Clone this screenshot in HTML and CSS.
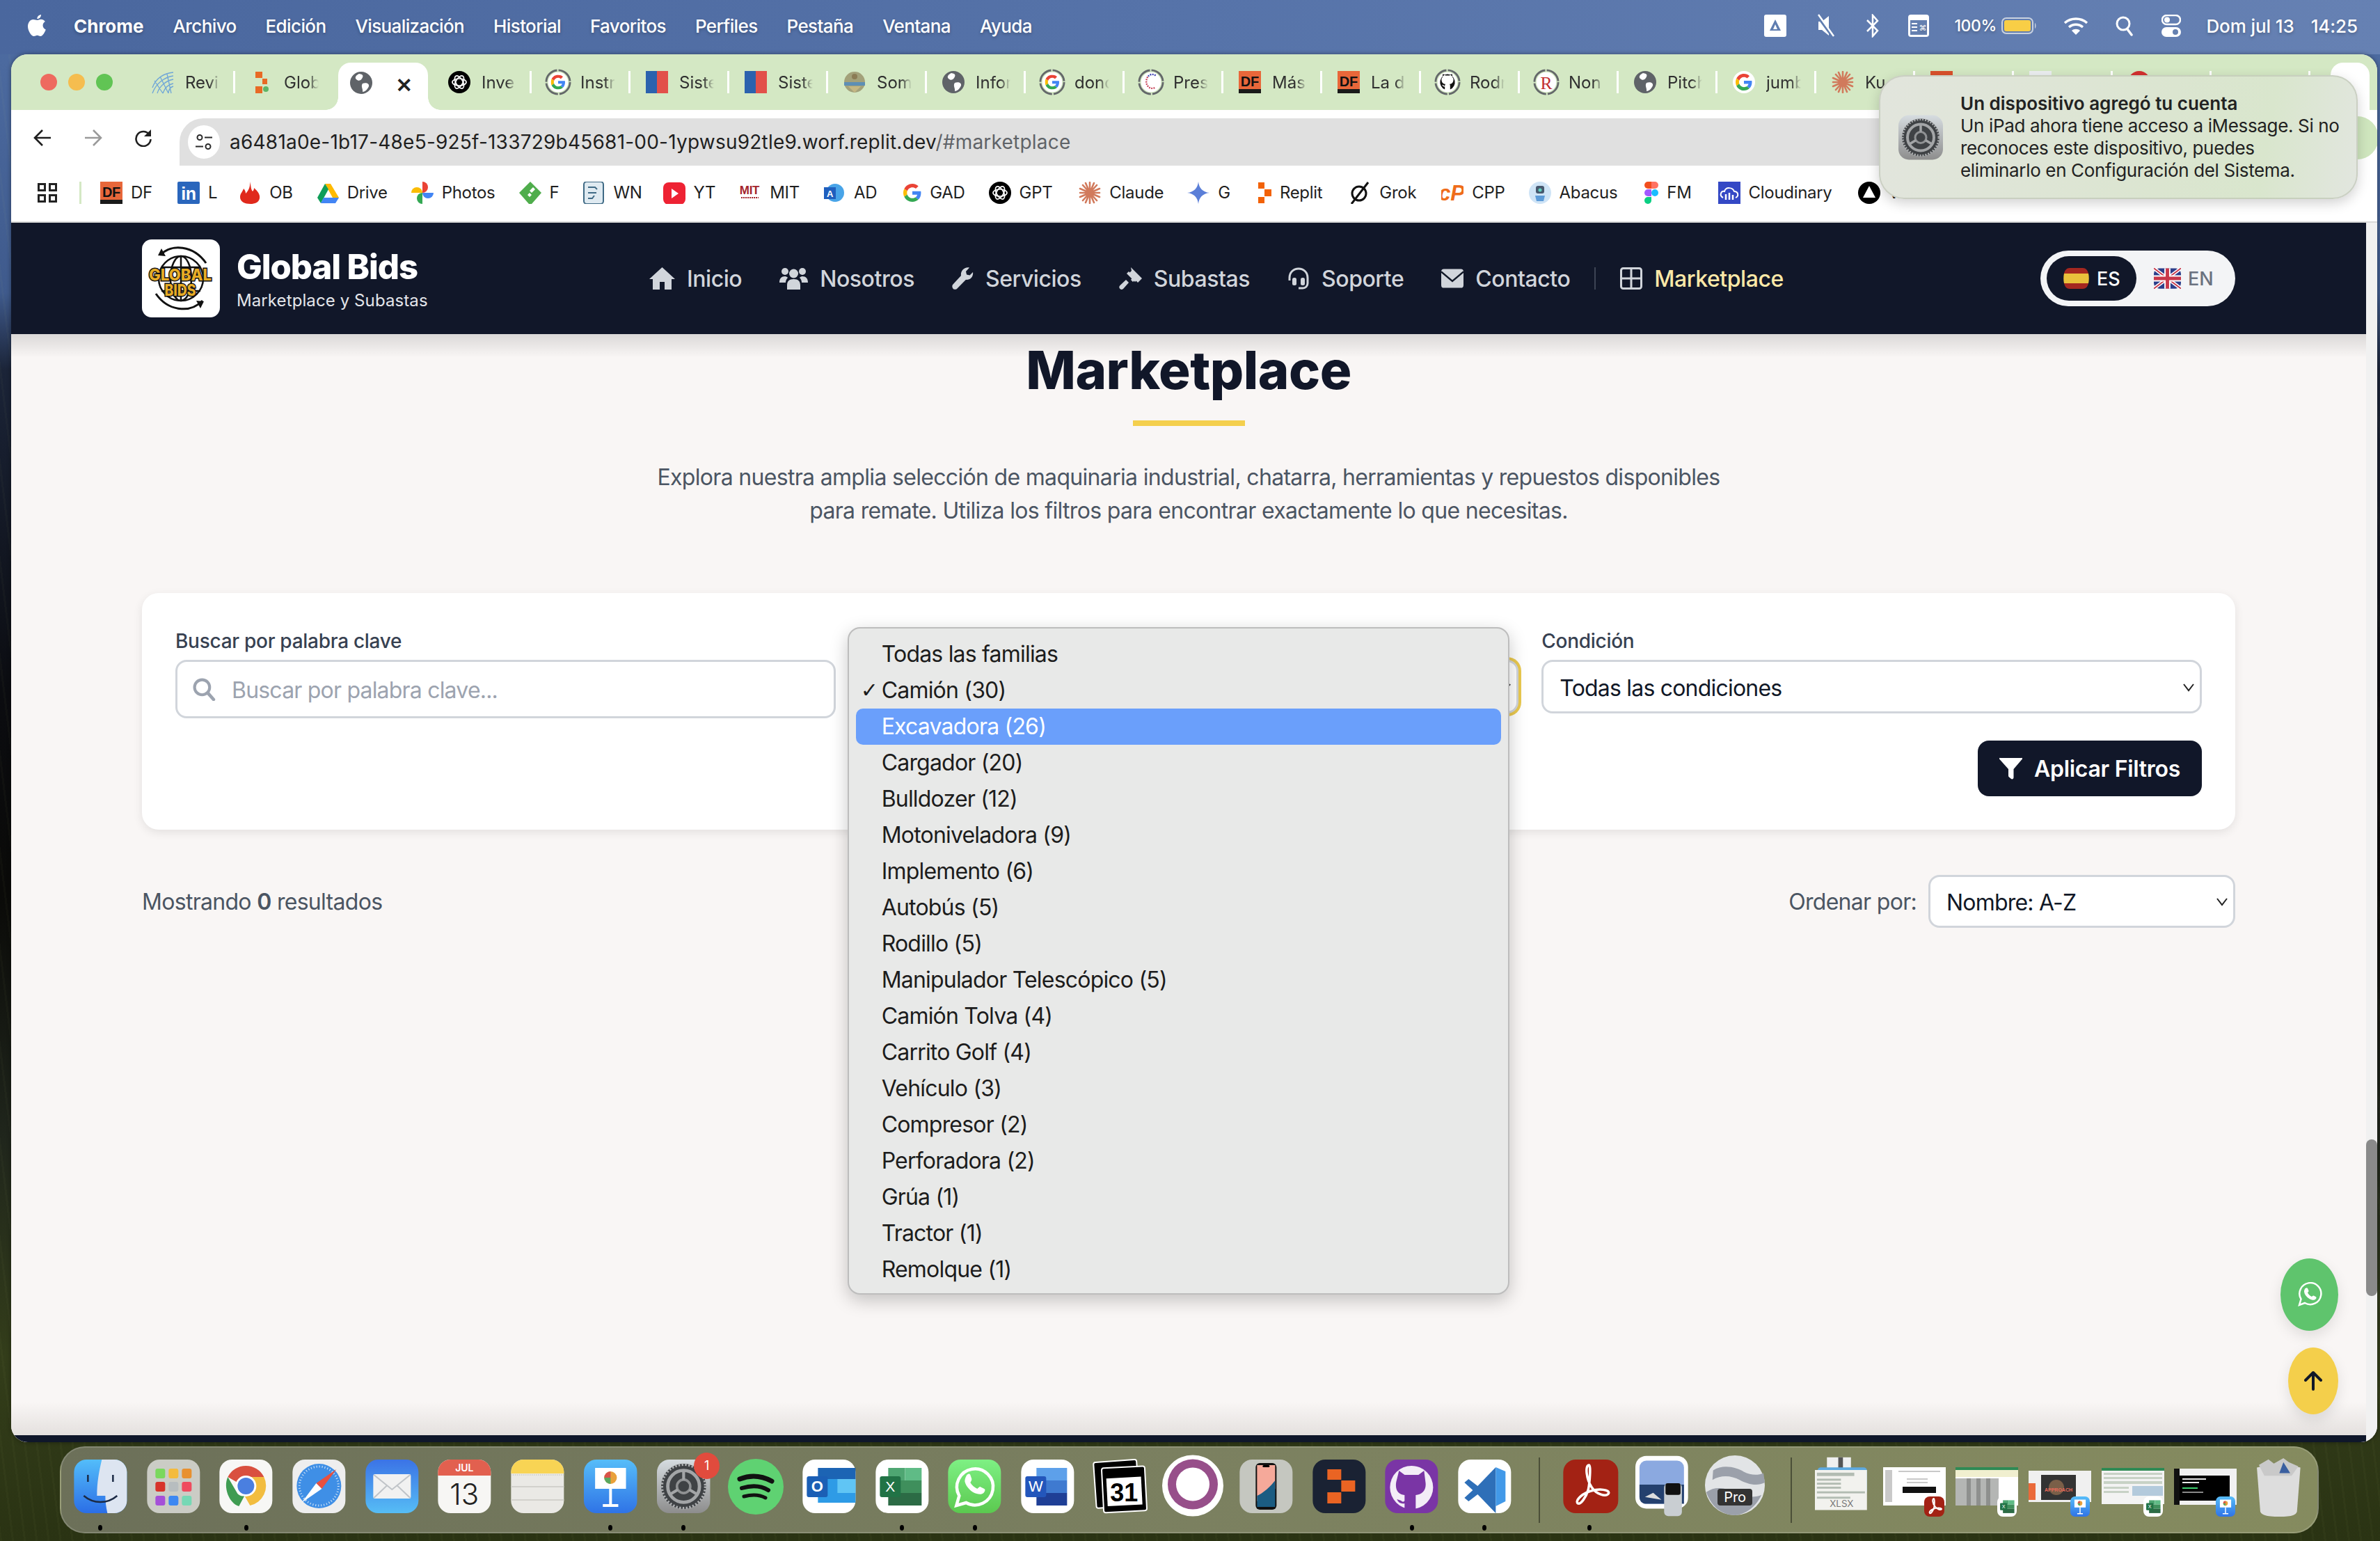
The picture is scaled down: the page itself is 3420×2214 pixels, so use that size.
FILE: index.html
```html
<!DOCTYPE html>
<html lang="es">
<head>
<meta charset="utf-8">
<title>Global Bids - Marketplace</title>
<link rel="stylesheet" href="styles.css">
</head>
<body>
<svg class="defs" width="0" height="0" aria-hidden="true">
  <symbol id="globe" viewBox="0 0 32 32"><circle cx="16" cy="16" r="16" fill="#5f6368"/><path fill="#fff" d="M13 3C9 5 6 8 9 11c3 3 6 2 8-1 2-3 3-6-4-7zM18 17c5-2 10 0 9 4-2 5-6 8-9 8 1-4-3-8 0-12z"/></symbol>
  <symbol id="g" viewBox="0 0 48 48"><path fill="#EA4335" d="M24 9.5c3.54 0 6.71 1.22 9.21 3.6l6.85-6.85C35.9 2.38 30.47 0 24 0 14.62 0 6.51 5.38 2.56 13.22l7.98 6.19C12.43 13.72 17.74 9.5 24 9.5z"/><path fill="#4285F4" d="M46.98 24.55c0-1.57-.15-3.09-.38-4.55H24v9.02h12.94c-.58 2.96-2.26 5.48-4.78 7.18l7.73 6c4.51-4.18 7.09-10.36 7.09-17.65z"/><path fill="#FBBC05" d="M10.53 28.59c-.48-1.45-.76-2.99-.76-4.59s.27-3.14.76-4.59l-7.98-6.19C.92 16.46 0 20.12 0 24c0 3.88.92 7.54 2.56 10.78l7.97-6.19z"/><path fill="#34A853" d="M24 48c6.48 0 11.93-2.13 15.89-5.81l-7.73-6c-2.15 1.45-4.92 2.3-8.16 2.3-6.26 0-11.57-4.22-13.47-9.91l-7.98 6.19C6.51 42.62 14.62 48 24 48z"/></symbol>
  <symbol id="ring" viewBox="0 0 40 40"><circle cx="20" cy="20" r="15" fill="#fff"/><circle cx="20" cy="20" r="18" fill="none" stroke="#64686a" stroke-width="3" stroke-dasharray="26 2.3"/></symbol>
  <symbol id="gpt" viewBox="0 0 32 32"><circle cx="16" cy="16" r="16" fill="#000"/><g fill="none" stroke="#fff" stroke-width="1.7"><ellipse cx="16" cy="16" rx="10" ry="5"/><ellipse cx="16" cy="16" rx="10" ry="5" transform="rotate(60 16 16)"/><ellipse cx="16" cy="16" rx="10" ry="5" transform="rotate(120 16 16)"/></g></symbol>
  <symbol id="df" viewBox="0 0 32 32"><rect width="32" height="32" fill="#e8673a"/><rect y="26" width="32" height="6" fill="#1a1a1a"/><text x="16" y="22" text-anchor="middle" font-family="Liberation Sans" font-weight="700" font-size="20" fill="#111">DF</text></symbol>
  <symbol id="claude" viewBox="0 0 32 32"><path stroke="#d17a5c" stroke-width="2.6" stroke-linecap="round" d="M16 1v30M2 16h28M6 5l20 22M26 5L6 27M10 2l12 28M22 2L10 30M2 10l28 12M30 10L2 22"/></symbol>
  <symbol id="gear" viewBox="0 0 64 64"><defs><linearGradient id="gg" x1="0" y1="0" x2="0" y2="1"><stop offset="0" stop-color="#d6dce0"/><stop offset="1" stop-color="#8d8d8d"/></linearGradient></defs><rect width="64" height="64" rx="15" fill="url(#gg)"/><circle cx="32" cy="32" r="27" fill="#3f4245"/><circle cx="32" cy="32" r="26" fill="none" stroke="#aeb0b2" stroke-width="3" stroke-dasharray="2 2"/><circle cx="32" cy="32" r="19" fill="none" stroke="#a3a5a7" stroke-width="4"/><circle cx="32" cy="32" r="8" fill="none" stroke="#8f9193" stroke-width="3"/><path stroke="#a3a5a7" stroke-width="3.5" d="M32 24V13M39 36l10 6M25 36l-10 6"/></symbol>
  <symbol id="excelmark" viewBox="0 0 76 77"><path fill="#4ea672" d="M18 12h24v18H18z"/><path fill="#5fbb86" d="M42 12h24v18H42z"/><path fill="#3f8f5c" d="M18 30h48v18H18z"/><path fill="#2c6b45" d="M18 48h48v18H18z"/><rect x="6" y="24" width="30" height="30" rx="3" fill="#217346"/><text x="21" y="46" text-anchor="middle" font-family="Liberation Sans" font-size="21" fill="#fff">X</text></symbol>
  <symbol id="keymark" viewBox="0 0 76 77" preserveAspectRatio="none"><defs><linearGradient id="kg" x1="0" y1="0" x2="0" y2="1"><stop offset="0" stop-color="#56bdf9"/><stop offset="1" stop-color="#2f73e6"/></linearGradient></defs><rect width="76" height="77" rx="18" fill="url(#kg)"/><path fill="#fff" d="M16 12h44v30H16z"/><circle cx="38" cy="26" r="9" fill="#e9a13b"/><path fill="#5aa85f" d="M38 26v9a9 9 0 0 1-9-9z"/><path fill="#d8534a" d="M38 26V17a9 9 0 0 0-9 9z"/><path fill="#fff" d="M36 42h4v24h-4zM27 64h22v4H27z"/></symbol>
</svg>

<header class="menubar">
  <svg class="apple" viewBox="0 0 26 32"><path fill="#fff" d="M19 0c.3 3-2.4 6.300-5.600 6.100C13 3 16 .3 19 0zM13.500 8c1.500 0 3-1.300 5.500-1.300 2 0 4.300 1 5.800 3.200-4.900 2.900-4 9.500 1 11.600-1 3-4.300 9.500-7.600 9.500-1.800 0-2.600-1.300-4.700-1.300s-2.900 1.300-4.700 1.300C4.800 31 0 23 0 17 0 11 3.800 7 7.600 7c2.400 0 4.200 1 5.900 1z"/></svg>
  <nav class="menu-items">
    <span class="menu-app">Chrome</span><span>Archivo</span><span>Edición</span><span>Visualización</span><span>Historial</span><span>Favoritos</span><span>Perfiles</span><span>Pestaña</span><span>Ventana</span><span>Ayuda</span>
  </nav>
  <div class="status">
    <svg class="st st-drive" viewBox="0 0 32 32"><rect width="32" height="32" rx="3" fill="#fff"/><path d="M16 7l8 16H8z" fill="#5f7db0"/><path d="M16 14l3 7h-6z" fill="#fff"/></svg>
    <svg class="st st-mute" viewBox="0 0 26 34"><path fill="#fff" d="M3 11h5l10-8v28l-10-8H3z"/><path stroke="#5f7db0" stroke-width="4" d="M1 2l22 30"/><path stroke="#fff" stroke-width="2.500" d="M3 1l22 31"/></svg>
    <svg class="st st-bt" viewBox="0 0 20 34"><path fill="none" stroke="#fff" stroke-width="2.500" d="M2 9l15 15-7 8V2l7 8L2 25"/></svg>
    <svg class="st st-kb" viewBox="0 0 30 32"><rect width="30" height="32" rx="4" fill="#fff"/><rect x="3" y="8" width="24" height="21" fill="#6580b0"/><path stroke="#fff" stroke-width="2" d="M5 13h8M5 18h8M5 23h8"/><text x="21" y="23" text-anchor="middle" font-size="11" fill="#fff" font-family="DejaVu Sans">⌘</text></svg>
    <span class="st-pct">100%</span>
    <svg class="st st-bat" viewBox="0 0 51 24"><rect x="1" y="1" width="44" height="22" rx="6" fill="none" stroke="#c9d2e0" stroke-width="2"/><rect x="4" y="4" width="38" height="16" rx="3" fill="#f8ce46"/><path d="M48 8c2 1 2 7 0 8z" fill="#c9d2e0"/></svg>
    <svg class="st st-wifi" viewBox="0 0 36 26"><g fill="none" stroke="#fff" stroke-width="3.500"><path d="M2 9c9-8 23-8 32 0"/><path d="M8 15c6-5 14-5 20 0"/></g><path fill="#fff" d="M18 26l-6-6c3-3 9-3 12 0z"/></svg>
    <svg class="st st-search" viewBox="0 0 25 30"><circle cx="11" cy="12" r="9" fill="none" stroke="#fff" stroke-width="3"/><path stroke="#fff" stroke-width="3.500" stroke-linecap="round" d="M17 20l6 8"/></svg>
    <svg class="st st-cc" viewBox="0 0 28 32"><rect x="1" y="1" width="26" height="13" rx="6.500" fill="none" stroke="#fff" stroke-width="2.500"/><circle cx="8" cy="7.500" r="4" fill="#fff"/><rect y="18" width="28" height="14" rx="7" fill="#fff"/><circle cx="20" cy="25" r="4" fill="#6580b0"/></svg>
    <span class="clock"><span>Dom jul 13</span><span>14:25</span></span>
  </div>
</header>

<div class="window">
  <div class="tabstrip">
    <div class="lights"><i class="light light-r"></i><i class="light light-y"></i><i class="light light-g"></i></div>
    <div class="tabs">
      <div class="tab"><svg class="fav" viewBox="0 0 32 32"><g fill="none" stroke="#6fa6d8" stroke-width="1.300"><path d="M1 24C6 10 18 3 31 2M1 32C6 18 18 9 31 7M8 32c3-10 12-18 23-20M16 32c3-8 8-13 15-14M24 32c0-5 3-9 7-10M4 14l12 18M12 8l12 24M22 4l6 28"/></g></svg><span class="tab-t">Revis</span></div>
      <div class="tab"><svg class="fav" viewBox="0 0 32 32"><path fill="#e86a25" d="M7 1h10v9H7zM7 22h10v10H7zM17 11h7v8h-7z"/><circle cx="22" cy="26" r="4" fill="#5eb567"/></svg><span class="tab-t">Globa</span></div>
      <div class="tab tab-active"><svg class="fav"><use href="#globe"/></svg><span class="tab-x">×</span></div>
      <div class="tab"><svg class="fav"><use href="#gpt"/></svg><span class="tab-t">Inve</span></div>
      <div class="tab"><svg class="fav fav-ring" viewBox="0 0 40 40"><use href="#ring"/><use href="#g" x="9" y="9" width="22" height="22"/></svg><span class="tab-t">Instr</span></div>
      <div class="tab"><svg class="fav" viewBox="0 0 32 32"><rect width="16" height="32" fill="#2b62ae"/><rect x="16" width="16" height="32" fill="#e2504a"/></svg><span class="tab-t">Siste</span></div>
      <div class="tab"><svg class="fav" viewBox="0 0 32 32"><rect width="32" height="32" fill="#2b62ae" x="0"/><rect x="16" width="16" height="32" fill="#e2504a"/></svg><span class="tab-t">Siste</span></div>
      <div class="tab"><svg class="fav" viewBox="0 0 32 32"><circle cx="16" cy="16" r="15" fill="#a3a17a"/><path d="M1 16h30v5H1z" fill="#5d8fb5"/><path d="M7 22h18l-9 9z" fill="#c4b783"/><circle cx="16" cy="8" r="4" fill="#8b7b55"/></svg><span class="tab-t">Som</span></div>
      <div class="tab"><svg class="fav"><use href="#globe"/></svg><span class="tab-t">Infor</span></div>
      <div class="tab"><svg class="fav fav-ring" viewBox="0 0 40 40"><use href="#ring"/><use href="#g" x="9" y="9" width="22" height="22"/></svg><span class="tab-t">donde</span></div>
      <div class="tab"><svg class="fav fav-ring" viewBox="0 0 40 40"><use href="#ring"/><path fill="none" stroke="#3a3fae" stroke-width="2.500" stroke-dasharray="2 1.500" d="M27 10c-4-3-9-2-12 2"/><path fill="none" stroke="#c9455a" stroke-width="2.500" stroke-dasharray="2 1.500" d="M15 12c-3 5-3 11 1 15 3 3 7 3 11 1"/></svg><span class="tab-t">Pres</span></div>
      <div class="tab"><svg class="fav"><use href="#df"/></svg><span class="tab-t">Más</span></div>
      <div class="tab"><svg class="fav"><use href="#df"/></svg><span class="tab-t">La d</span></div>
      <div class="tab"><svg class="fav fav-ring" viewBox="0 0 40 40"><use href="#ring"/><path fill="#111" d="M20 8a12 12 0 0 0-4 23v-4c-3 0-4-2-4-3 2 0 3 2 4 2 0-2 1-3 1-3-3 0-6-2-6-7 0-2 1-3 2-4-1-2 0-4 0-4s2 0 4 2h6c2-2 4-2 4-2s1 2 0 4c1 1 2 2 2 4 0 5-3 7-6 7 1 1 1 2 1 3v5A12 12 0 0 0 20 8z"/></svg><span class="tab-t">Rodr</span></div>
      <div class="tab"><svg class="fav fav-ring" viewBox="0 0 40 40"><use href="#ring"/><text x="20" y="30" text-anchor="middle" font-family="Liberation Serif" font-size="27" fill="#c22f2f">R</text></svg><span class="tab-t">Non</span></div>
      <div class="tab"><svg class="fav"><use href="#globe"/></svg><span class="tab-t">Pitch</span></div>
      <div class="tab"><svg class="fav" viewBox="0 0 32 32"><circle cx="16" cy="16" r="16" fill="#fff"/><use href="#g" x="4" y="4" width="24" height="24"/></svg><span class="tab-t">jumb</span></div>
      <div class="tab"><svg class="fav"><use href="#claude"/></svg><span class="tab-t">Ku</span></div>
      <div class="tab"><svg class="fav" viewBox="0 0 32 32"><rect width="32" height="32" fill="#d9512c"/></svg></div>
      <div class="tab"><svg class="fav" viewBox="0 0 32 32"><rect width="32" height="32" fill="#eceff1"/></svg></div>
      <div class="tab"><svg class="fav" viewBox="0 0 32 32"><circle cx="16" cy="16" r="16" fill="#d3302f"/></svg></div>
      <div class="tab"></div>
    </div>
    <div class="tab-last"></div>
  </div>

  <div class="toolbar">
    <svg class="nav-ic" viewBox="0 0 26 26"><path fill="none" stroke="#1f1f1f" stroke-width="2.600" d="M25 13H3M13 2L2 13l11 11"/></svg>
    <svg class="nav-ic nav-ic-fwd" viewBox="0 0 26 26"><path fill="none" stroke="#9a9a9a" stroke-width="2.600" d="M1 13h22M13 2l11 11-11 11"/></svg>
    <svg class="nav-ic" viewBox="0 0 26 26"><path fill="none" stroke="#1f1f1f" stroke-width="2.600" d="M22 9a10.500 10.500 0 1 0 1.500 6"/><path fill="#1f1f1f" d="M24 1v10H14z"/></svg>
    <div class="omnibox">
      <span class="tune"><svg viewBox="0 0 26 26"><g fill="none" stroke="#2a2a2a" stroke-width="2"><circle cx="7" cy="6.500" r="3.500"/><circle cx="19" cy="19.500" r="3.500"/><path d="M14 6.500h11M1 19.500h11"/></g></svg></span>
      <span class="url">a6481a0e-1b17-48e5-925f-133729b45681-00-1ypwsu92tle9.worf.replit.dev<span class="url-hash">/#marketplace</span></span>
    </div>
    <div class="avatar"></div>
  </div>

  <div class="bookmarks">
    <svg class="bm-apps" viewBox="0 0 28 28"><g fill="none" stroke="#222" stroke-width="3"><rect x="1.500" y="1.500" width="9" height="9"/><rect x="17.500" y="1.500" width="9" height="9"/><rect x="1.500" y="17.500" width="9" height="9"/><rect x="17.500" y="17.500" width="9" height="9"/></g></svg>
    <i class="bm-sep"></i>
    <div class="bm"><svg class="bi"><use href="#df"/></svg>DF</div>
    <div class="bm"><svg class="bi" viewBox="0 0 32 32"><rect width="32" height="32" rx="2" fill="#2a66bc"/><text x="16" y="26" text-anchor="middle" font-family="Liberation Sans" font-weight="700" font-size="25" fill="#fff">in</text></svg>L</div>
    <div class="bm"><svg class="bi" viewBox="0 0 32 32"><path fill="#e0291c" d="M16 0c2 6 1 10 4 14 2-2 2-4 2-5 6 5 9 10 8 15-1 6-7 8-13 8C9 32 2 29 2 22c0-5 4-8 5-12 2 2 3 4 3 7 4-4 7-10 6-17z"/></svg>OB</div>
    <div class="bm"><svg class="bi" viewBox="0 0 32 32"><path fill="#ffba00" d="M20 3l12 20h-9L12 3z"/><path fill="#0f9d58" d="M12 3L1 23l5 8 11-20z"/><path fill="#4285f4" d="M10 23h22l-5 8H6z"/></svg>Drive</div>
    <div class="bm"><svg class="bi" viewBox="0 0 32 32"><path fill="#ea4335" d="M16 0a8 8 0 0 1 0 16z"/><path fill="#4285f4" d="M32 16a8 8 0 0 1-16 0z"/><path fill="#34a853" d="M16 32a8 8 0 0 1 0-16z"/><path fill="#fbbc05" d="M0 16a8 8 0 0 1 16 0z"/></svg>Photos</div>
    <div class="bm"><svg class="bi" viewBox="0 0 32 32"><path fill="#4fad4c" d="M16 0l16 16-14 16h-4L0 16z"/><path fill="#fff" d="M15 13l5-5 3 3-5 5zM12 19l3-3 3 3-3 3z"/></svg>F</div>
    <div class="bm"><svg class="bi" viewBox="0 0 32 32"><rect x="2" width="28" height="32" rx="4" fill="#dfeaf1" stroke="#3f6a85" stroke-width="2"/><path fill="none" stroke="#3f6a85" stroke-width="2" d="M8 8h10l3 3M8 16h12M8 24h6l3-4"/></svg>WN</div>
    <div class="bm"><svg class="bi" viewBox="0 0 32 32"><rect width="32" height="32" rx="8" y="1" fill="#ee2233"/><path fill="#fff" d="M12 10l10 7-10 7z"/></svg>YT</div>
    <div class="bm"><svg class="bi" viewBox="0 0 32 32"><text x="15" y="18" text-anchor="middle" font-family="Liberation Sans" font-weight="700" font-size="17" fill="#a3252c">MIT</text><path stroke="#a3252c" stroke-width="2" d="M3 23h25" stroke-dasharray="2 1"/></svg>MIT</div>
    <div class="bm"><svg class="bi" viewBox="0 0 32 32"><circle cx="17" cy="16" r="13" fill="#48a4e8"/><rect x="1" y="8" width="17" height="17" fill="#1f5fbe"/><text x="9.500" y="22" text-anchor="middle" font-family="Liberation Sans" font-weight="700" font-size="13" fill="#fff">A</text></svg>AD</div>
    <div class="bm"><svg class="bi bi-narrow" viewBox="0 0 48 48"><use href="#g"/></svg>GAD</div>
    <div class="bm"><svg class="bi"><use href="#gpt"/></svg>GPT</div>
    <div class="bm"><svg class="bi"><use href="#claude"/></svg>Claude</div>
    <div class="bm"><svg class="bi" viewBox="0 0 32 32"><path fill="#5b7fd8" d="M16 0c1 9 6 15 16 16-10 1-15 7-16 16-1-9-6-15-16-16 10-1 15-7 16-16z"/></svg>G</div>
    <div class="bm"><svg class="bi bi-slim" viewBox="0 0 20 32"><path fill="#f26207" d="M1 1h9v9H1zM10 11h10v10H10zM1 22h9v9H1z"/></svg>Replit</div>
    <div class="bm"><svg class="bi" viewBox="0 0 32 32"><circle cx="15" cy="17" r="10" fill="none" stroke="#111" stroke-width="3"/><path stroke="#111" stroke-width="3" d="M28 1L4 32"/></svg>Grok</div>
    <div class="bm"><svg class="bi" viewBox="0 0 32 32"><text x="15" y="27" text-anchor="middle" font-family="Liberation Sans" font-style="italic" font-weight="700" font-size="31" fill="#ef6c1a">cP</text></svg>CPP</div>
    <div class="bm"><svg class="bi" viewBox="0 0 32 32"><circle cx="16" cy="16" r="16" fill="#cfe4f6"/><rect x="10" y="6" width="12" height="11" rx="3" fill="#47586e"/><circle cx="16" cy="12" r="2.500" fill="#5fd0c0"/><path d="M9 20h14l-2 8H11z" fill="#5d9bd8"/></svg>Abacus</div>
    <div class="bm"><svg class="bi bi-slim" viewBox="0 0 20 32"><path fill="#f24e1e" d="M10 0v10H5a5 5 0 0 1 0-10z"/><path fill="#ff7262" d="M10 0h5a5 5 0 0 1 0 10h-5z"/><path fill="#a259ff" d="M10 11v10H5a5 5 0 0 1 0-10z"/><circle cx="15" cy="16" r="5" fill="#1abcfe"/><path fill="#0acf83" d="M5 22h5v5a5 5 0 1 1-5-5z"/></svg>FM</div>
    <div class="bm"><svg class="bi" viewBox="0 0 32 32"><rect width="32" height="32" fill="#3448c5"/><path fill="none" stroke="#fff" stroke-width="2" d="M7 23c-6-3-3-10 2-9 2-7 12-6 14 0 6 0 7 7 2 9"/><path stroke="#fff" stroke-width="2.500" d="M11 18v8M16 16v10M21 19v7"/></svg>Cloudinary</div>
    <div class="bm"><svg class="bi" viewBox="0 0 32 32"><circle cx="16" cy="16" r="16" fill="#000"/><path fill="#fff" d="M16 6l9 17H7z"/></svg>V</div>
  </div>

  <div class="viewport">
    <div class="page">
      <header class="site-header">
        <div class="brand">
          <svg class="logo" viewBox="0 0 112 112">
            <rect width="112" height="112" rx="14" fill="#fff"/>
            <g fill="none" stroke="#111" stroke-width="2.500"><circle cx="56" cy="56" r="32"/><ellipse cx="56" cy="56" rx="15" ry="32"/><path d="M56 24v64M28 40h56M28 74h56"/><path stroke-width="3" d="M27 22C42 6 74 8 92 34M87 88C70 106 38 104 20 78"/></g>
            <path fill="#111" d="M23 23l5-10 6 11zM89 89l-5 10-6-11z"/>
            <g class="logo-word"><text x="55" y="59" text-anchor="middle" font-size="23" textLength="90" lengthAdjust="spacingAndGlyphs">GLOBAL</text><text x="55" y="81" text-anchor="middle" font-size="23" textLength="45" lengthAdjust="spacingAndGlyphs">BIDS</text></g>
          </svg>
          <div class="brand-text"><div class="brand-name">Global Bids</div><div class="brand-sub">Marketplace y Subastas</div></div>
        </div>
        <nav class="site-nav">
          <a class="nl"><svg class="ni ni-37" viewBox="0 0 37 32"><path fill="#d1d5db" d="M18.500 0L37 17h-5v15H22V21h-7v11H5V17H0z"/></svg>Inicio</a>
          <a class="nl"><svg class="ni ni-41" viewBox="0 0 41 32"><g fill="#d1d5db"><circle cx="8" cy="6" r="5"/><circle cx="33" cy="6" r="5"/><circle cx="20.500" cy="9" r="6.500"/><path d="M0 22c0-6 3-9 8-9 2 0 3 1 4 2-2 2-3 4-3 7zM41 22c0-6-3-9-8-9-2 0-3 1-4 2 2 2 3 4 3 7zM11 32v-6c0-6 3-9 9.500-9S30 20 30 26v6z"/></g></svg>Nosotros</a>
          <a class="nl"><svg class="ni ni-31" viewBox="0 0 31 32"><path fill="#d1d5db" d="M30 7c1 6-3 11-9 11l-1-.2L7 31c-2 1.500-5 1-6-1s-1-4 .5-5.500L13 12C12 6 17-1 25 .5l-5 5.500 1 4.500 4.500 1z"/></svg>Servicios</a>
          <a class="nl"><svg class="ni ni-33" viewBox="0 0 33 32"><path fill="#d1d5db" d="M17 0l16 16-6 6-4-4-3 3-3-3 3-4-5-6 3-3zM10 18l4 4L6 31c-2 1.500-4 1-5-.5s-1-3 .5-4.500z"/><path fill="#d1d5db" d="M14 6l12 12-3 3L11 9z"/></svg>Subastas</a>
          <a class="nl"><svg class="ni ni-32" viewBox="0 0 32 32"><path fill="none" stroke="#d1d5db" stroke-width="3" d="M3 19v-4C3 7 9 2 16 2s13 5 13 13v8c0 4-3 7-7 7h-6"/><rect x="7" y="15" width="6" height="11" rx="2.500" fill="#d1d5db"/><rect x="19" y="15" width="6" height="11" rx="2.500" fill="#d1d5db"/></svg>Soporte</a>
          <a class="nl"><svg class="ni ni-32" viewBox="0 0 33 32"><rect x="0" y="2" width="33" height="28" rx="4" fill="#d1d5db"/><path fill="none" stroke="#111827" stroke-width="2.500" d="M0 6l16.500 14L33 6"/></svg>Contacto</a>
          <i class="nav-sep"></i>
          <a class="nl nl-active"><svg class="ni ni-32" viewBox="0 0 32 32"><rect x="1.500" y="1.500" width="29" height="29" rx="3" fill="none" stroke="#d1d5db" stroke-width="3"/><path stroke="#d1d5db" stroke-width="3" d="M16 2v28M2 16h28"/></svg>Marketplace</a>
        </nav>
        <div class="lang">
          <div class="lang-opt lang-on"><svg class="flag" viewBox="0 0 39 30"><path fill="#a42720" d="M10 0h19c4 0 7 3 8 8H2C3 3 6 0 10 0zM2 22h35c-1 5-4 8-8 8H10c-4 0-7-3-8-8z"/><path fill="#e9c13c" d="M2 8h35c1 4 1 10 0 14H2C1 18 1 12 2 8z"/></svg>ES</div>
          <div class="lang-opt"><svg class="flag" viewBox="0 0 40 30"><rect width="40" height="30" rx="8" fill="#2c3e8a"/><path stroke="#fff" stroke-width="5" d="M0 0l40 30M40 0L0 30"/><path stroke="#c8384a" stroke-width="2" d="M0 0l40 30M40 0L0 30"/><path stroke="#fff" stroke-width="9" d="M20 0v30M0 15h40"/><path stroke="#c8384a" stroke-width="5" d="M20 0v30M0 15h40"/></svg>EN</div>
        </div>
      </header>

      <main class="main">
        <h1 class="title">Marketplace</h1>
        <div class="title-bar"></div>
        <p class="intro">Explora nuestra amplia selección de maquinaria industrial, chatarra, herramientas y repuestos disponibles<br>para remate. Utiliza los filtros para encontrar exactamente lo que necesitas.</p>

        <section class="filters">
          <div class="filter-grid">
            <div class="field">
              <label class="field-label">Buscar por palabra clave</label>
              <div class="searchbox">
                <svg class="search-ic" viewBox="0 0 32 32"><circle cx="13" cy="13" r="10.500" fill="none" stroke="#9ca3af" stroke-width="4"/><path stroke="#9ca3af" stroke-width="4.500" stroke-linecap="round" d="M21 21l8 9"/></svg>
                <input class="search-input" type="text" placeholder="Buscar por palabra clave...">
              </div>
            </div>
            <div class="field">
              <div class="field-label">&nbsp;</div>
              <div class="select select-focus"></div>
              <ul class="dropdown">
                <li>Todas las familias</li>
                <li class="checked">Camión (30)</li>
                <li class="hl">Excavadora (26)</li>
                <li>Cargador (20)</li>
                <li>Bulldozer (12)</li>
                <li>Motoniveladora (9)</li>
                <li>Implemento (6)</li>
                <li>Autobús (5)</li>
                <li>Rodillo (5)</li>
                <li>Manipulador Telescópico (5)</li>
                <li>Camión Tolva (4)</li>
                <li>Carrito Golf (4)</li>
                <li>Vehículo (3)</li>
                <li>Compresor (2)</li>
                <li>Perforadora (2)</li>
                <li>Grúa (1)</li>
                <li>Tractor (1)</li>
                <li>Remolque (1)</li>
              </ul>
            </div>
            <div class="field">
              <label class="field-label">Condición</label>
              <select class="select"><option>Todas las condiciones</option></select>
            </div>
          </div>
          <div class="filter-actions">
            <button class="apply" type="button"><svg class="funnel" viewBox="0 0 32 32"><path fill="#fff" d="M1 1h30a1 1 0 0 1 1 2L20 17v12c0 2-2 3-3.500 2l-3-2.500c-.5-.5-1-1-1-2V17L0 3a1 1 0 0 1 1-2z"/></svg>Aplicar Filtros</button>
          </div>
        </section>

        <div class="results">
          <div class="count">Mostrando <b>0</b> resultados</div>
          <div class="sort"><span class="sort-label">Ordenar por:</span><select class="select select-sort"><option>Nombre: A-Z</option></select></div>
        </div>
      </main>
      <div class="strip"></div>
    </div>
    <div class="scrollbar"><div class="thumb"></div></div>
  </div>
</div>

<div class="fabs">
  <a class="fab fab-wa"><svg viewBox="0 0 36 36"><path fill="none" stroke="#fff" stroke-width="2.500" d="M3 33l2.500-8.500A15.500 15.500 0 1 1 11 30z"/><path fill="#fff" d="M12 9c1-1 2.500-1 3 0l1.500 3.500c.2 1-.8 1.800-1.500 2.700 1.500 2.800 3.500 4.500 6 5.800.8-.8 1.700-2 2.700-1.500l3.300 1.700c1 .8.500 2.300-.5 3.300-2 2-5.500 1.500-9-.5-4-2.500-7-6-7.500-10-.2-2 .8-3.800 1.500-5z"/></svg></a>
  <a class="fab fab-up"><svg viewBox="0 0 26 30"><path fill="none" stroke="#111827" stroke-width="4" stroke-linecap="round" stroke-linejoin="round" d="M13 27V3M2 14L13 3l11 11"/></svg></a>
</div>

<aside class="notice">
  <svg class="notice-ic"><use href="#gear"/></svg>
  <div class="notice-text">
    <div class="notice-title">Un dispositivo agregó tu cuenta</div>
    <div>Un iPad ahora tiene acceso a iMessage. Si no</div>
    <div>reconoces este dispositivo, puedes</div>
    <div>eliminarlo en Configuración del Sistema.</div>
  </div>
</aside>

<nav class="dock">
  <div class="di on"><svg viewBox="0 0 76 77"><defs><linearGradient id="fg" x1="0" y1="0" x2="0" y2="1"><stop offset="0" stop-color="#53bdfa"/><stop offset="1" stop-color="#2b6ee6"/></linearGradient></defs><rect width="76" height="77" rx="18" fill="url(#fg)"/><path fill="#dde5f1" d="M40 0h18c10 0 18 8 18 18v41c0 10-8 18-18 18H48c-2-9-3-17-3-25H33c0-20 3-35 7-52z"/><path stroke="#1b2a45" stroke-width="2.500" d="M20 22v10M56 22v10"/><path fill="none" stroke="#1b2a45" stroke-width="2.500" d="M14 52c14 12 34 12 48 0"/></svg></div>
  <div class="di"><svg viewBox="0 0 76 77"><rect width="76" height="77" rx="18" fill="#cbccc5"/><g><rect x="12" y="13" width="14" height="14" rx="3" fill="#7ad85d"/><rect x="31" y="13" width="14" height="14" rx="3" fill="#f4bb3d"/><rect x="50" y="13" width="14" height="14" rx="3" fill="#e8902f"/><rect x="12" y="32" width="14" height="14" rx="3" fill="#d7332a"/><rect x="31" y="32" width="14" height="14" rx="3" fill="#b7bdbf"/><rect x="50" y="32" width="14" height="14" rx="3" fill="#ef4b5e"/><rect x="12" y="52" width="14" height="14" rx="3" fill="#a550d8"/><rect x="31" y="52" width="14" height="14" rx="3" fill="#3d88f2"/><rect x="50" y="52" width="14" height="14" rx="3" fill="#76d8b5"/></g></svg></div>
  <div class="di on"><svg viewBox="0 0 76 77"><rect width="76" height="77" rx="18" fill="#f7f7f5"/><path fill="#d9503f" d="M38 9a29 29 0 0 1 26 16H38a13 13 0 0 0-12 8L12 25A29 29 0 0 1 38 9z"/><path fill="#f2bd3f" d="M64 25a29 29 0 0 1-20 41l-8-14c5 1 13-3 15-14 0-5-2-9-5-13z"/><path fill="#3f9c52" d="M12 25l14 24c3 3 6 4 10 3l-8 15C14 63 5 40 12 25z"/><circle cx="38" cy="38" r="15" fill="#fff"/><circle cx="38" cy="38" r="12" fill="#4a7fe0"/></svg></div>
  <div class="di"><svg viewBox="0 0 76 77"><rect width="76" height="77" rx="18" fill="#eeeeee"/><circle cx="38" cy="38" r="32" fill="#3f8fe6"/><circle cx="38" cy="38" r="28" fill="none" stroke="#dbeaf8" stroke-width="3" stroke-dasharray="1 3"/><path fill="#e8503f" d="M63 14L34 34l8 8z"/><path fill="#fff" d="M13 62l21-28 8 8z"/></svg></div>
  <div class="di"><svg viewBox="0 0 76 77"><defs><linearGradient id="mg" x1="0" y1="0" x2="0" y2="1"><stop offset="0" stop-color="#3b73e6"/><stop offset="1" stop-color="#56bdf5"/></linearGradient></defs><rect width="76" height="77" rx="18" fill="url(#mg)"/><rect x="11" y="21" width="54" height="35" rx="2" fill="#f1f1f1"/><path fill="none" stroke="#c0c4c8" stroke-width="2" d="M12 22l26 21 26-21M12 55l19-18M64 55L45 37"/></svg></div>
  <div class="di"><svg viewBox="0 0 76 77"><rect width="76" height="77" rx="18" fill="#f7f6f4"/><path fill="#e2604f" d="M18 0h40c10 0 18 8 18 18v5H0v-5C0 8 8 0 18 0z"/><text x="38" y="17" text-anchor="middle" font-family="Inter" font-weight="600" font-size="14" fill="#fff">JUL</text><text x="38" y="65" text-anchor="middle" font-family="Inter" font-weight="300" font-size="42" fill="#222">13</text></svg></div>
  <div class="di"><svg viewBox="0 0 76 77"><rect width="76" height="77" rx="18" fill="#eae9e5"/><path fill="#f8d454" d="M18 0h40c10 0 18 8 18 18v2H0v-2C0 8 8 0 18 0z"/><path stroke="#d2d1cc" stroke-width="2" d="M0 39h76M0 58h76"/><path stroke="#c9c7bc" stroke-width="2" stroke-dasharray="1 2" d="M0 22h76"/></svg></div>
  <div class="di on"><svg><use href="#keymark"/></svg></div>
  <div class="di on di-set"><svg viewBox="0 0 64 64" preserveAspectRatio="none"><use href="#gear"/></svg><span class="badge">1</span></div>
  <div class="di"><svg class="big" viewBox="0 0 80 80"><circle cx="40" cy="40" r="40" fill="#5fd272"/><g fill="none" stroke="#111" stroke-linecap="round"><path stroke-width="7" d="M17 29c15-6 31-5 46 3"/><path stroke-width="6" d="M20 42c13-4 27-4 38 3"/><path stroke-width="5" d="M23 54c11-3 22-3 31 2"/></g></svg></div>
  <div class="di"><svg viewBox="0 0 76 77"><rect width="76" height="77" rx="18" fill="#fff"/><path fill="#1c64b4" d="M22 12h54v16H22z"/><path fill="#2e9be6" d="M22 28h54v34H22z"/><path fill="#60c5f5" d="M50 28h26v20H50z"/><rect x="6" y="24" width="30" height="30" rx="3" fill="#1b5fb5"/><text x="21" y="46" text-anchor="middle" font-family="Liberation Sans" font-weight="700" font-size="22" fill="#fff">O</text></svg></div>
  <div class="di on"><svg viewBox="0 0 76 77"><rect width="76" height="77" rx="18" fill="#fff"/><use href="#excelmark"/></svg></div>
  <div class="di on"><svg viewBox="0 0 76 77"><defs><linearGradient id="wg" x1="0" y1="0" x2="0" y2="1"><stop offset="0" stop-color="#7ef084"/><stop offset="1" stop-color="#5bc94f"/></linearGradient></defs><rect width="76" height="77" rx="18" fill="url(#wg)"/><path fill="none" stroke="#fff" stroke-width="4.500" d="M12 66l4-14a26 26 0 1 1 10 10z"/><path fill="#fff" d="M27 22c2-2 4-2 5 0l2 6c0 2-1 3-2 5 2 4 6 7 10 9 1-1 3-3 4-3l6 3c2 1 1 4-1 6-3 3-9 2-15-1-6-4-11-10-12-16 0-4 2-7 3-9z"/></svg></div>
  <div class="di"><svg viewBox="0 0 76 77"><rect width="76" height="77" rx="18" fill="#fff"/><path fill="#5da0ea" d="M22 12h44v18H22z"/><path fill="#3f7ad0" d="M22 30h44v18H22z"/><path fill="#1f3f96" d="M22 48h44v18H22z"/><rect x="6" y="24" width="30" height="30" rx="3" fill="#2356bb"/><text x="21" y="46" text-anchor="middle" font-family="Liberation Sans" font-size="22" fill="#fff">W</text></svg></div>
  <div class="di"><svg viewBox="0 0 76 77"><rect x="1" y="2" width="62" height="66" rx="3" fill="#000" stroke="#fff" stroke-width="2" transform="rotate(-4 30 35)"/><rect x="12" y="11" width="62" height="64" rx="3" fill="#000" stroke="#fff" stroke-width="2" transform="rotate(-3 40 40)"/><rect x="18" y="26" width="50" height="40" fill="#fff" transform="rotate(-3 40 40)"/><text x="43" y="60" text-anchor="middle" font-family="Liberation Sans" font-weight="700" font-size="36" fill="#000">31</text></svg></div>
  <div class="di"><svg class="big big-circle" viewBox="0 0 90 90"><ellipse cx="45" cy="45" rx="44" ry="44" fill="#fff"/><circle cx="45" cy="43" r="36" fill="#974f8a"/><circle cx="45" cy="43" r="24" fill="#fff"/></svg></div>
  <div class="di"><svg viewBox="0 0 76 77"><rect width="76" height="77" rx="18" fill="#c5c7c0"/><rect x="23" y="5" width="30" height="67" rx="6" fill="#111"/><path fill="#f5a99a" d="M25 8h26v34L25 60z"/><path fill="#1b5c82" d="M25 68V52c8-3 20-14 26-22v38z"/><rect x="33" y="8" width="10" height="3" rx="1.500" fill="#000"/></svg></div>
  <div class="di"><svg viewBox="0 0 76 77"><rect width="76" height="77" rx="18" fill="#1a2233"/><path fill="#ea6423" d="M21 14h20v15H21zM41 30h20v16H41zM21 47h20v16H21z"/></svg></div>
  <div class="di on"><svg viewBox="0 0 76 77"><rect width="76" height="77" rx="18" fill="#7a35a5"/><circle cx="38" cy="40" r="31" fill="#f3edf7"/><path fill="#7a35a5" d="M20 16l8 6h20l8-6 2 16c2 12-5 18-14 19v26h-16V63c-5 1-9-1-11-6l6 2c2 2 4 2 5 0v-8c-9-1-14-7-12-19z"/></svg></div>
  <div class="di on"><svg viewBox="0 0 76 77"><rect width="76" height="77" rx="18" fill="#fff"/><path fill="#2e6fb8" d="M54 11L28 38 15 28l-6 5 12 11-12 11 6 5 13-10 26 27z"/><path fill="#4299e8" d="M54 11l14 6v43l-14 7z"/></svg></div>
  <i class="dock-sep dock-sep-a"></i>
  <div class="di on"><svg viewBox="0 0 76 77"><rect width="79" height="77" rx="18" fill="#a32214"/><path fill="none" stroke="#fff" stroke-width="3.500" d="M37 8c-6 0-4 20 4 32 7 10 20 14 24 9 3-6-14-8-28-3-13 5-20 14-16 17 4 2 12-9 15-20 2-10 4-35 1-35z"/></svg></div>
  <div class="di"><svg class="tall" viewBox="0 0 78 88"><rect y="0" width="77" height="77" rx="16" fill="#fff"/><rect x="6" y="7" width="65" height="63" rx="10" fill="#8ba9e0"/><path fill="#24406e" d="M6 42h65v28H16c-6 0-10-4-10-10z"/><path fill="#ddd" d="M14 60l12-6 12 10z"/><rect x="42" y="40" width="26" height="48" rx="6" fill="#c9ced2"/><rect x="44" y="40" width="22" height="17" rx="3" fill="#111"/></svg></div>
  <div class="di"><svg class="big big-earth" viewBox="0 0 88 90"><ellipse cx="44" cy="44" rx="44" ry="44" fill="#e2e4e6"/><path fill="#9ba0aa" d="M12 22c15-10 35-4 45 2 10 5 20 6 29 2l2 14c-12 6-26 2-37-4-12-6-26-8-40 0zM2 54c14-10 30-6 45 2 14 6 28 6 36 2-6 14-20 28-38 30C22 88 8 72 2 54z"/></svg><span class="pro">Pro</span></div>
  <i class="dock-sep dock-sep-b"></i>
  <div class="di"><svg class="tall" viewBox="0 0 80 88"><rect x="18" y="1" width="36" height="22" fill="#efefef"/><rect x="35" y="1" width="7" height="22" fill="#555"/><rect x="4" y="16" width="74" height="40" rx="5" fill="#5da9df"/><rect y="20" width="78" height="60" fill="#f2f2ee"/><g fill="#b2bcb2"><rect x="3" y="24" width="56" height="5"/><rect x="3" y="33" width="36" height="3"/><rect x="3" y="39" width="36" height="3"/><rect x="3" y="45" width="36" height="3"/><rect x="3" y="52" width="72" height="3"/><rect x="3" y="60" width="50" height="3"/></g><text x="40" y="75" text-anchor="middle" font-family="Inter" font-size="14" fill="#777">XLSX</text></svg></div>
  <div class="di"><svg class="tall wide" viewBox="0 0 90 88"><rect y="17" width="90" height="55" fill="#fff"/><g fill="#c9c9c9"><rect x="3" y="21" width="10" height="46"/><rect x="22" y="22" width="60" height="2"/><rect x="34" y="33" width="30" height="2"/><rect x="34" y="38" width="30" height="2"/></g><rect x="28" y="45" width="48" height="9" fill="#111"/><rect x="59" y="59" width="29" height="29" rx="8" fill="#a32214"/><path fill="none" stroke="#fff" stroke-width="2" d="M73 62c-3 0-2 8 2 12 3 4 8 5 9 3-1-2-7-2-12 0-5 2-6 5-5 6 2 1 4-3 6-7 1-4 1-14 0-14z"/></svg></div>
  <div class="di"><svg class="tall wide" viewBox="0 0 90 88"><rect y="17" width="90" height="55" fill="#fff"/><rect y="17" width="90" height="4" fill="#2f8a55"/><rect y="21" width="90" height="10" fill="#f0efcf"/><rect x="0" y="33" width="62" height="39" fill="#b4b6b4"/><g fill="#8e908e"><rect x="16" y="33" width="6" height="39"/><rect x="30" y="33" width="6" height="39"/><rect x="44" y="33" width="6" height="39"/></g><rect x="60" y="59" width="28" height="29" rx="8" fill="#fff"/><use href="#excelmark" x="62" y="60" width="26" height="27"/></svg></div>
  <div class="di"><svg class="tall wide" viewBox="0 0 90 88"><rect y="22" width="90" height="45" fill="#f0f0f0"/><rect x="18" y="28" width="50" height="36" fill="#333"/><circle cx="40" cy="46" r="11" fill="#7a5f48"/><text x="43" y="52" text-anchor="middle" font-family="Liberation Sans" font-size="7" font-weight="700" fill="#ea6a5a">APPROACH</text><rect x="0" y="40" width="10" height="24" fill="#ea6a3a"/><use href="#keymark" x="60" y="59" width="28" height="29"/></svg></div>
  <div class="di"><svg class="tall wide" viewBox="0 0 90 88"><rect y="18" width="90" height="52" fill="#f3f3f3"/><rect y="18" width="90" height="4" fill="#2f8a55"/><g fill="#c8d2c6"><rect x="3" y="25" width="84" height="3"/><rect x="3" y="31" width="84" height="3"/><rect x="3" y="37" width="84" height="4"/><rect x="3" y="45" width="36" height="3"/><rect x="3" y="51" width="36" height="3"/><rect x="44" y="44" width="44" height="14" fill="#b3cadc"/></g><rect x="60" y="59" width="28" height="29" rx="8" fill="#fff"/><use href="#excelmark" x="62" y="60" width="26" height="27"/></svg></div>
  <div class="di"><svg class="tall wide" viewBox="0 0 90 88"><rect y="19" width="90" height="52" fill="#f1f1f1"/><rect y="19" width="8" height="52" fill="#111"/><rect x="8" y="29" width="72" height="36" fill="#000"/><g fill="#e8e8e8"><rect x="12" y="33" width="34" height="2"/><rect x="12" y="38" width="24" height="2"/></g><rect x="12" y="46" width="22" height="2" fill="#3fcf6f"/><rect x="12" y="52" width="30" height="2" fill="#888"/><use href="#keymark" x="60" y="59" width="28" height="29"/></svg></div>
  <div class="di"><svg class="tall" viewBox="0 0 70 90"><path fill="#ddd" d="M3 18c20-6 44-6 64 0l-5 64c-1 5-6 8-26 8S9 87 8 82z"/><path fill="#c9c9c9" d="M6 14l14-8 8 6 14-8 8 6 14 6-10 14H14z"/><path fill="#3a5fa0" d="M42 10l10 16H36z"/></svg></div>
</nav>
</body>
</html>
```

FILE: styles.css
```css
* { box-sizing: border-box; }
html, body { margin: 0; padding: 0; }
body {
  position: relative;
  width: 3420px;
  height: 2214px;
  overflow: hidden;
  font-family: Inter, "Liberation Sans", sans-serif;
  color: #111827;
  background:
    repeating-linear-gradient(83deg, rgba(190,200,120,.03) 0 3px, transparent 3px 17px),
    linear-gradient(180deg, #4f6ea4 0, #3f5a8c 19%, #1b2438 24%, #0b0c10 45%, #0a0a08 58%, #20261c 74%, #333d1a 88%, #2a3313 100%);
}
.defs { position: absolute; }

/* macOS menu bar */
.menubar {
  display: flex;
  align-items: center;
  height: 78px;
  padding: 0 32px 4px 39px;
  color: #fff;
  font-size: 26px;
  font-weight: 500;
  background: linear-gradient(90deg, #4a679e, #5673a9 50%, #6681b3);
  text-shadow: 0 2px 4px rgba(0,0,0,.25);
}
.apple { width: 28px; height: 32px; margin-right: 39px; }
.menu-items { display: flex; gap: 42px; letter-spacing: -.62px; }
.menu-app { font-weight: 700; letter-spacing: 0; }
.status { display: flex; align-items: center; margin-left: auto; }
.st { display: block; flex: none; }
.st-drive { width: 32px; height: 32px; margin-right: 43px; }
.st-mute { width: 26px; height: 34px; margin-right: 45px; }
.st-bt { width: 20px; height: 34px; margin-right: 41px; }
.st-kb { width: 30px; height: 32px; margin-right: 36px; }
.st-pct { font-size: 23px; width: 68px; letter-spacing: -.4px; }
.st-bat { width: 51px; height: 24px; margin-right: 38px; }
.st-wifi { width: 36px; height: 26px; margin-right: 39px; }
.st-search { width: 25px; height: 30px; margin-right: 41px; }
.st-cc { width: 28px; height: 32px; margin-right: 36px; }
.clock { display: flex; gap: 24px; letter-spacing: -.1px; }

/* Browser window */
.window {
  width: 3400px;
  height: 1994px;
  margin-left: 16px;
  border-radius: 24px;
  overflow: hidden;
  background: #fff;
  box-shadow: 0 0 6px rgba(0,0,0,.4);
}
.tabstrip {
  display: flex;
  align-items: center;
  height: 80px;
  padding-left: 42px;
  background: #d4e8c4;
  position: relative;
}
.lights { display: flex; gap: 16px; margin-right: 34px; }
.light { display: block; width: 24px; height: 24px; border-radius: 50%; }
.light-r { background: #ee6a5f; }
.light-y { background: #f5bd4f; }
.light-g { background: #61c454; }
.tabs { display: flex; align-items: center; }
.tab {
  display: flex;
  align-items: center;
  gap: 16px;
  flex: none;
  width: 142px;
  height: 32px;
  padding-left: 22px;
  border-right: 3px solid #fff;
  font-size: 24px;
  color: #303030;
  white-space: nowrap;
  overflow: visible;
}
.tab-t {
  display: block;
  width: 50px;
  overflow: hidden;
  -webkit-mask-image: linear-gradient(90deg, #000 70%, transparent);
  mask-image: linear-gradient(90deg, #000 70%, transparent);
}
.fav { width: 32px; height: 32px; flex: none; display: block; overflow: visible; }
.fav-ring { width: 38px; height: 40px; margin: -4px -3px; }
.tab-active {
  position: relative;
  border-right: 0;
  height: 68px;
  margin-top: 12px;
  margin-left: 6px;
  width: 129px;
  padding: 0 0 10px 17px;
  background: #fff;
  border-radius: 18px 18px 0 0;
  gap: 33px;
}
.tab-active::before,
.tab-active::after {
  content: "";
  position: absolute;
  bottom: 0;
  width: 18px;
  height: 18px;
}
.tab-active::before { left: -18px; background: radial-gradient(circle at 0 0, transparent 17.5px, #fff 18px); }
.tab-active::after { right: -18px; background: radial-gradient(circle at 100% 0, transparent 17.5px, #fff 18px); }
.tab-x { font-size: 38px; line-height: 1; color: #222; font-weight: 500; }
.tab:nth-child(2) { border-right: 0; }
.tab:nth-child(4) { margin-left: 7px; }
.tab-last {
  position: absolute;
  left: 3333px;
  top: 12px;
  width: 56px;
  height: 68px;
  background: #fff;
  border-radius: 18px 18px 0 0;
}
.toolbar {
  display: flex;
  align-items: center;
  height: 80px;
  padding: 0 0 0 32px;
  background: #fff;
}
.nav-ic { width: 26px; height: 26px; margin-right: 47px; flex: none; }
.nav-ic-fwd { margin-right: 46px; }
.nav-ic:nth-child(3) { margin-right: 39px; }
.omnibox {
  display: flex;
  align-items: center;
  flex: 1;
  height: 68px;
  margin-top: 0;
  padding-left: 12px;
  align-self: flex-end;
  background: #e0e0e0;
  border-radius: 34px 34px 0 0;
}
.tune {
  display: flex;
  align-items: center;
  justify-content: center;
  width: 46px;
  height: 48px;
  border-radius: 50%;
  background: #fff;
  margin-right: 14px;
}
.tune svg { width: 26px; height: 26px; }
.url { font-size: 28px; color: #1f1f1f; letter-spacing: .22px; white-space: nowrap; }
.url-hash { color: #5f6368; }
.avatar {
  width: 62px;
  height: 62px;
  margin: 0 -2px 0 20px;
  border-radius: 50%;
  background: #cfe6be;
  flex: none;
}
.bookmarks {
  display: flex;
  align-items: center;
  gap: 34px;
  height: 82px;
  padding: 0 0 3px 38px;
  border-bottom: 2px solid #d9d9d9;
  background: #fff;
  font-size: 24px;
  letter-spacing: -.3px;
  color: #1f1f1f;
  white-space: nowrap;
}
.bm-apps { width: 28px; height: 28px; flex: none; margin-right: -2px; }
.bm-sep { display: block; width: 3px; height: 32px; background: #d4e8c4; margin-right: -7px; }
.bm { display: flex; align-items: center; gap: 12px; flex: none; }
.bm:nth-child(4) { margin-left: 2px; }
.bm:nth-child(5) { margin-left: -3px; }
.bm:nth-child(10) { margin-left: -4px; }
.bm:nth-child(13) { margin-left: 4px; }
.bm:nth-child(15) { margin-left: 4px; }
.bm:nth-child(17) { margin-left: 5px; }
.bm:nth-child(18) { margin-left: 4px; }
.bm:nth-child(19) { margin-left: 2px; }
.bm:nth-child(21) { margin-left: 5px; }
.bm:nth-child(22) { margin-left: 4px; }
.bm:nth-child(23) { margin-left: 3px; }
.bi { width: 32px; height: 32px; flex: none; display: block; }
.bi-narrow { width: 26px; }
.bi-slim { width: 20px; }

/* Page */
.viewport { display: flex; height: 1752px; }
.page {
  display: flex;
  flex-direction: column;
  width: 3384px;
  background: #f9f6f5;
}
.scrollbar { width: 16px; background: #f1f1f1; padding-top: 1317px; }
.thumb { height: 225px; border-radius: 8px; background: #8a8a8a; }
.site-header {
  display: flex;
  align-items: center;
  flex: none;
  height: 160px;
  padding: 0 188px;
  background: #111729;
}
.brand { display: flex; align-items: center; gap: 24px; width: 729px; flex: none; }
.logo { width: 112px; height: 112px; display: block; flex: none; }
.logo-word text {
  font-family: Inter, sans-serif;
  font-weight: 800;
  fill: #e6ac26;
  stroke: #111;
  stroke-width: 3px;
  paint-order: stroke;
}
.brand-text { padding-top: 3px; }
.brand-name {
  font-size: 49px;
  line-height: 58px;
  font-weight: 800;
  letter-spacing: -1.1px;
  color: #fff;
}
.brand-sub { font-size: 24px; line-height: 34px; margin-top: 2px; color: #e3e5ea; letter-spacing: .1px; }
.site-nav { display: flex; align-items: center; gap: 54px; flex: none; }
.nl { display: flex; align-items: center; gap: 17px; font-size: 32px; font-weight: 500; letter-spacing: -.45px; color: #d1d5db; white-space: nowrap; }
.nl-active { color: #fde9a8; }
.ni { display: block; flex: none; height: 32px; }
.ni-37 { width: 37px; }
.ni-41 { width: 41px; }
.ni-31 { width: 31px; }
.ni-33 { width: 33px; }
.ni-32 { width: 32px; }
.nav-sep { display: block; width: 2px; height: 32px; background: #3d4454; margin: 0 -19px; }
.lang {
  display: flex;
  align-items: center;
  margin-left: auto;
  width: 280px;
  height: 80px;
  padding: 0 9px;
  border-radius: 40px;
  background: #f3f4f6;
  font-size: 27px;
  font-weight: 500;
}
.lang-opt { display: flex; align-items: center; gap: 10px; padding-left: 25px; color: #6b7280; }
.lang-on {
  width: 129px;
  height: 64px;
  padding-left: 23px;
  border-radius: 32px;
  background: #111729;
  color: #fff;
}
.flag { width: 39px; height: 30px; display: block; flex: none; }
.main {
  position: relative;
  flex: 1;
  display: flex;
  flex-direction: column;
  padding: 7px 188px 0;
}
.main::before {
  content: "";
  position: absolute;
  left: 0; right: 0; top: 0;
  height: 34px;
  background: linear-gradient(180deg, rgba(0,0,0,.12), rgba(0,0,0,0));
}
.main::after {
  content: "";
  position: absolute;
  left: 0; right: 0; bottom: 0;
  height: 48px;
  background: linear-gradient(180deg, rgba(60,50,40,0), rgba(60,50,40,.11));
}
.title {
  margin: 0;
  text-align: center;
  font-size: 76px;
  line-height: 88px;
  font-weight: 800;
  letter-spacing: -.5px;
  color: #111729;
}
.title-bar { width: 161px; height: 8px; margin: 29px auto 0; background: #f4cf4d; }
.intro {
  margin: 50px 0 0;
  text-align: center;
  font-size: 32px;
  line-height: 48px;
  letter-spacing: -.68px;
  color: #4b5563;
}
.filters {
  height: 340px;
  margin-top: 94px;
  padding: 48px;
  border-radius: 24px;
  background: #fff;
  box-shadow: 0 4px 14px rgba(0,0,0,.09);
}
.filter-grid { display: grid; grid-template-columns: repeat(3, 1fr); gap: 33px; }
.field { position: relative; }
.field-label {
  display: block;
  font-size: 28px;
  line-height: 42px;
  margin-bottom: 6px;
  font-weight: 500;
  letter-spacing: -.28px;
  color: #374151;
}
.searchbox {
  display: flex;
  align-items: center;
  gap: 23px;
  height: 84px;
  padding: 0 22px;
  border: 3px solid #d1d5db;
  border-radius: 16px;
  background: #fff;
}
.search-ic { width: 33px; height: 33px; flex: none; }
.search-input {
  flex: 1;
  border: 0;
  outline: 0;
  padding: 2px 0 0;
  font: 400 32px Inter, sans-serif;
  letter-spacing: -.8px;
  color: #111827;
  background: transparent;
}
.search-input::placeholder { color: #9ca3af; opacity: 1; }
.select {
  display: block;
  width: 100%;
  height: 77px;
  padding: 3px 40px 0 23px;
  border: 3px solid #d1d5db;
  border-radius: 16px;
  font: 400 32px Inter, sans-serif;
  letter-spacing: -.8px;
  color: #111827;
  appearance: none;
  -webkit-appearance: none;
  background: #fff url("data:image/svg+xml,%3Csvg xmlns='http://www.w3.org/2000/svg' width='16' height='18' viewBox='0 0 16 18'%3E%3Cpath fill='none' stroke='%23222' stroke-width='2' d='M1 5l7 9 7-9'/%3E%3C/svg%3E") no-repeat right 8px center;
}
.select-focus { border-color: #d1d5db; box-shadow: 0 0 0 4px #eac94f; }
.select-sort { width: 441px; flex: none; height: 76px; }
.dropdown {
  position: absolute;
  left: -16px;
  top: 1px;
  z-index: 5;
  width: 951px;
  height: 959px;
  margin: 0;
  padding: 11px 10px 10px;
  list-style: none;
  border: 2px solid #bdbdbd;
  border-radius: 18px;
  background: #e8e9e8;
  box-shadow: 0 8px 26px rgba(0,0,0,.22);
  font-size: 32px;
  letter-spacing: -.8px;
  color: #1c1c1c;
}
.dropdown li {
  position: relative;
  height: 52px;
  line-height: 52px;
  padding-left: 37px;
  border-radius: 10px;
}
.dropdown .hl { background: #6a9ffb; color: #fff; }
.dropdown .checked::before {
  content: "✓";
  position: absolute;
  left: 7px;
  font-size: 30px;
  font-weight: 700;
  font-family: "DejaVu Sans", sans-serif;
}
.filter-actions { display: flex; justify-content: flex-end; margin-top: 32px; }
.apply {
  display: flex;
  align-items: center;
  gap: 17px;
  height: 80px;
  padding: 0 31px;
  border: 0;
  border-radius: 16px;
  background: #111729;
  color: #fff;
  font: 600 32px Inter, sans-serif;
  letter-spacing: -.3px;
}
.funnel { width: 33px; height: 32px; flex: none; }
.results {
  display: flex;
  align-items: center;
  justify-content: space-between;
  margin-top: 65px;
  font-size: 32px;
  letter-spacing: -.7px;
  color: #4b5563;
}
.count b { font-weight: 600; }
.sort { display: flex; align-items: center; gap: 17px; }
.strip { flex: none; height: 10px; background: #0f172a; }

/* Floating buttons */
.fabs {
  position: absolute;
  right: 60px;
  top: 1808px;
  display: flex;
  flex-direction: column;
  align-items: flex-end;
  gap: 24px;
}
.fab {
  display: flex;
  align-items: center;
  justify-content: center;
  border-radius: 50%;
  box-shadow: 0 8px 20px rgba(0,0,0,.1);
}
.fab-wa { width: 83px; height: 104px; background: #5fc46d; }
.fab-wa svg { width: 36px; height: 36px; }
.fab-up { width: 72px; height: 96px; background: #f4cf4b; }
.fab-up svg { width: 26px; height: 30px; }

/* Notification */
.notice {
  position: absolute;
  left: 2700px;
  top: 108px;
  display: flex;
  align-items: center;
  gap: 25px;
  width: 688px;
  height: 178px;
  padding: 0 0 0 26px;
  border: 2px solid rgba(180,185,170,.5);
  border-radius: 36px;
  background: linear-gradient(100deg, #e2e5dd, #dbe5d0 60%, #d9e6cd 80%, #e2e6df);
  box-shadow: 0 6px 18px rgba(0,0,0,.18);
  font-size: 26px;
  line-height: 32px;
  letter-spacing: -.35px;
  color: #222;
  white-space: nowrap;
}
.notice-ic { width: 64px; height: 65px; flex: none; }
.notice-title { font-weight: 600; letter-spacing: 0; }

/* Dock */
.dock {
  position: relative;
  display: flex;
  align-items: flex-start;
  gap: 28px;
  width: 3246px;
  height: 125px;
  margin: 6px 0 0 86px;
  padding: 17px 0 0 18px;
  border: 2px solid rgba(255,255,255,.16);
  border-radius: 36px;
  background: linear-gradient(90deg, #6c7059, #7b8060 50%, #858b5f);
}
.di { position: relative; width: 76.7px; height: 77px; flex: none; }
.di > svg { display: block; width: 100%; height: 100%; overflow: visible; }
.di.on::after {
  content: "";
  position: absolute;
  left: 50%;
  top: 94px;
  width: 6px;
  height: 8px;
  margin-left: -3px;
  border-radius: 50%;
  background: #000;
}
.di > svg.big { width: 80px; height: 80px; margin: -1px -2px; }
.di > svg.big-circle { width: 90px; height: 91px; margin: -8px -7px; }
.di > svg.big-earth { width: 88px; height: 88px; margin: -6px -6px; }
.di > svg.tall { height: 88px; margin-top: -6px; }
.di > svg.tall.wide { width: 90px; margin-left: -7px; }
.badge {
  position: absolute;
  right: -14px;
  top: -10px;
  width: 37px;
  height: 38px;
  border-radius: 50%;
  background: #e14b3d;
  color: #fff;
  font-size: 18px;
  line-height: 38px;
  text-align: center;
}
.pro {
  position: absolute;
  left: 13px;
  top: 42px;
  width: 50px;
  height: 24px;
  border-radius: 4px;
  background: #333;
  color: #fff;
  font-size: 20px;
  line-height: 24px;
  text-align: center;
}
.dock-sep { display: block; flex: none; width: 2px; height: 94px; margin-top: -3px; background: #4b4f38; }
.dock-sep-a { margin-left: 11px; margin-right: 5px; }
.dock-sep-b { margin-left: 13px; margin-right: 5px; }
```
